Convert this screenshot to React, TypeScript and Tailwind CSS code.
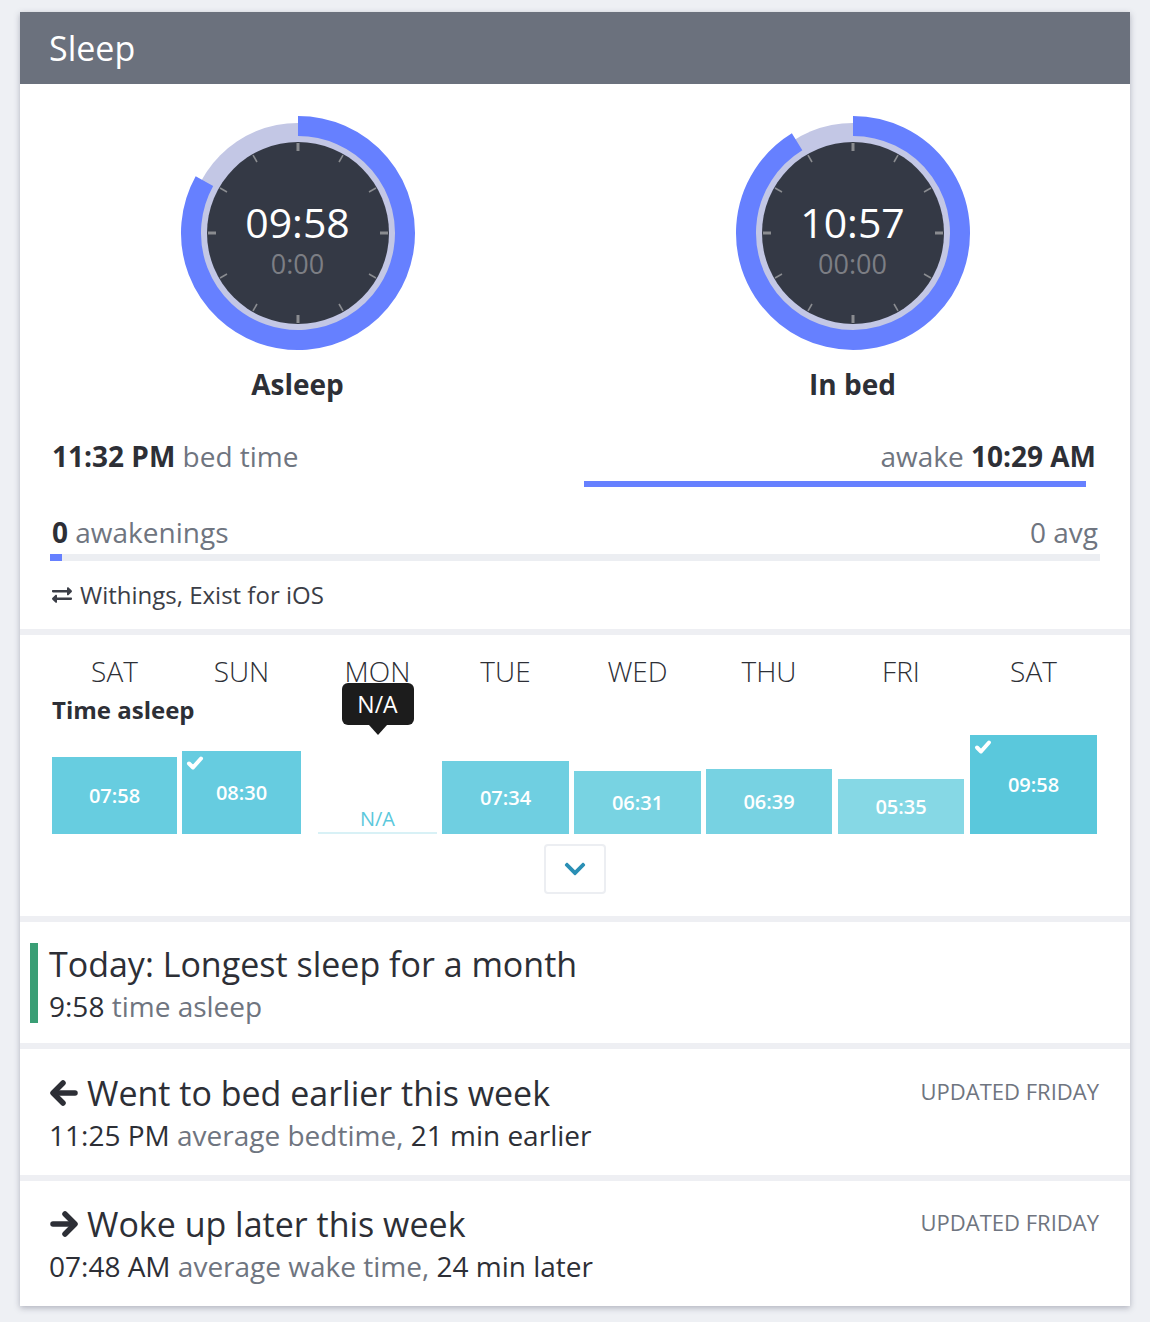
import { FaExchangeAlt, FaChevronDown } from 'react-icons/fa';

function arcPath(frac: number) {
  const a = frac * 2 * Math.PI;
  const r = 107;
  const x = 120 + r * Math.sin(a);
  const y = 120 - r * Math.cos(a);
  const large = frac > 0.5 ? 1 : 0;
  return `M 120 13 A ${r} ${r} 0 ${large} 1 ${x.toFixed(2)} ${y.toFixed(2)}`;
}

function Dial({ value, sub, frac, label }: { value: string; sub: string; frac: number; label: string }) {
  const ticks = Array.from({ length: 12 }, (_, i) => i * 30);
  return (
    <div className="flex flex-col items-center">
      <div className="relative w-[240px] h-[240px]">
        <svg width="240" height="240" viewBox="0 0 240 240">
          <circle cx="120" cy="120" r="110" fill="#c3c7e5" />
          <path d={arcPath(frac)} fill="none" stroke="#6680ff" strokeWidth="20" />
          <circle cx="120" cy="120" r="91" fill="#343945" />
          {ticks.map((deg) => {
            const a = (deg * Math.PI) / 180;
            return (
              <line
                key={deg}
                x1={120 + 82 * Math.sin(a)}
                y1={120 - 82 * Math.cos(a)}
                x2={120 + 90 * Math.sin(a)}
                y2={120 - 90 * Math.cos(a)}
                stroke="#8a8c90"
                strokeWidth={deg % 90 === 0 ? 3 : 1.6}
              />
            );
          })}
        </svg>
        <div className="absolute inset-0 flex flex-col items-center pt-[89px]">
          <div className="text-white text-[41px] leading-[40px]">{value}</div>
          <div className="text-[#7c7e84] text-[27px] leading-[28px] mt-[8px]">{sub}</div>
        </div>
      </div>
      <div className="mt-[15px] text-[28px] leading-[32px] font-bold text-[#2d2f36]">{label}</div>
    </div>
  );
}

function Check() {
  return (
    <svg className="absolute left-[4px] top-[4px]" width="18" height="16" viewBox="0 0 18 16">
      <polyline points="3,8.5 7,12.5 15,3.5" fill="none" stroke="white" strokeWidth="4" strokeLinecap="round" strokeLinejoin="round" />
    </svg>
  );
}

function Arrow({ dir }: { dir: 'left' | 'right' }) {
  return (
    <svg width="30" height="28" viewBox="0 0 30 28" className={dir === 'right' ? 'scale-x-[-1]' : ''}>
      <polyline points="14,4 4,14 14,24" fill="none" stroke="#2d2f36" strokeWidth="5.5" strokeLinecap="round" strokeLinejoin="round" />
      <line x1="5" y1="14" x2="26" y2="14" stroke="#2d2f36" strokeWidth="5.5" strokeLinecap="round" />
    </svg>
  );
}

const days = [
  { day: 'SAT', value: '07:58', box: 'w-[125px] h-[77px] bg-[#67cde0]', col: 'w-[125px]', check: false },
  { day: 'SUN', value: '08:30', box: 'w-[119px] h-[83px] bg-[#66cce0]', col: 'w-[119px] ml-[5px]', check: true },
  { day: 'MON', value: 'N/A', box: '', col: 'w-[119px] ml-[17px]', check: false },
  { day: 'TUE', value: '07:34', box: 'w-[127px] h-[73px] bg-[#6fcfe1]', col: 'w-[127px] ml-[5px]', check: false },
  { day: 'WED', value: '06:31', box: 'w-[127px] h-[63px] bg-[#78d3e2]', col: 'w-[127px] ml-[5px]', check: false },
  { day: 'THU', value: '06:39', box: 'w-[126px] h-[65px] bg-[#77d2e2]', col: 'w-[126px] ml-[5px]', check: false },
  { day: 'FRI', value: '05:35', box: 'w-[126px] h-[55px] bg-[#86d8e5]', col: 'w-[126px] ml-[6px]', check: false },
  { day: 'SAT', value: '09:58', box: 'w-[127px] h-[99px] bg-[#5ac8dc]', col: 'w-[127px] ml-[6px]', check: true },
];

function Divider() {
  return <div className="h-[6px] bg-[#eeeff3]" />;
}

export default function App() {
  return (
    <div className="min-h-screen bg-[#eef0f4] pt-[12px] px-[20px] pb-[17px] font-['Open_Sans',sans-serif]">
      <div className="bg-white shadow-[0_2px_6px_rgba(60,64,90,0.35)]">
        {/* Header */}
        <div className="h-[72px] bg-[#6b717d] flex items-center px-[29px]">
          <h1 className="text-white text-[34px] leading-none">Sleep</h1>
        </div>

        {/* Dials */}
        <div className="grid grid-cols-2 pt-[29px]">
          <Dial value="09:58" sub="0:00" frac={9.967 / 12} label="Asleep" />
          <Dial value="10:57" sub="00:00" frac={10.95 / 12} label="In bed" />
        </div>

        {/* Bed / awake */}
        <div className="px-[30px] pt-[40px] pb-[20px]">
          <div className="grid grid-cols-2">
            <div className="text-[28px] leading-[32px] ml-[2px]">
              <span className="font-bold text-[#2d2f36]">11:32 PM</span>{' '}
              <span className="text-[#6f7580]">bed time</span>
            </div>
            <div className="flex flex-col">
              <div className="text-[28px] leading-[32px] text-right mr-[4px]">
                <span className="text-[#6f7580]">awake</span>{' '}
                <span className="font-bold text-[#2d2f36]">10:29 AM</span>
              </div>
              <div className="h-[6px] bg-[#6680ff] mt-[9px] ml-[9px] mr-[14px]" />
            </div>
          </div>

          <div className="flex justify-between items-baseline mt-[29px] text-[28px] leading-[32px] px-[2px]">
            <div>
              <span className="font-bold text-[#2d2f36]">0</span>{' '}
              <span className="text-[#6f7580]">awakenings</span>
            </div>
            <span className="text-[#6f7580]">0 avg</span>
          </div>
          <div className="h-[7px] bg-[#eceef2] mt-[6px]">
            <div className="h-full w-[12px] bg-[#6680ff]" />
          </div>

          <div className="flex items-center gap-[6px] mt-[20px] text-[24px] leading-[28px] text-[#3b3e47]">
            <FaExchangeAlt className="w-[24px] h-[20px]" />
            <span>Withings, Exist for iOS</span>
          </div>
        </div>

        <Divider />

        {/* Weekly chart */}
        <div className="px-[32px] pt-[20px] pb-[22px]">
          <div className="flex">
            {days.map((d, i) => (
              <div key={i} className={`${d.col} relative text-center text-[28px] leading-[32px] font-light text-[#2d2f36]`}>
                {d.day}
                {d.value === 'N/A' && (
                  <div className="absolute left-1/2 -translate-x-1/2 top-[28px] z-10 flex flex-col items-center">
                    <div className="bg-[#1c1c1c] text-white text-[23px] leading-[42px] font-normal w-[72px] rounded-[6px]">N/A</div>
                    <div className="w-0 h-0 border-l-[9px] border-r-[9px] border-t-[10px] border-l-transparent border-r-transparent border-t-[#1c1c1c]" />
                  </div>
                )}
              </div>
            ))}
          </div>
          <div className="mt-[9px] text-[24px] leading-[28px] font-bold text-[#2d2f36]">Time asleep</div>

          <div className="flex items-end h-[110px]">
            {days.map((d, i) =>
              d.value === 'N/A' ? (
                <div key={i} className={`${d.col} flex flex-col items-center`}>
                  <span className="text-[#5bc8dc] text-[20px] leading-[24px] mb-[1px]">N/A</span>
                  <div className="w-full h-[2px] bg-[#d8f1f6]" />
                </div>
              ) : (
                <div key={i} className={`${d.col} relative flex items-center justify-center ${d.box}`}>
                  {d.check && <Check />}
                  <span className="text-white text-[20px] leading-[24px] font-semibold">{d.value}</span>
                </div>
              )
            )}
          </div>

          <div className="flex justify-center mt-[10px]">
            <button className="w-[62px] h-[50px] border-2 border-[#eceef2] rounded-[4px] flex items-center justify-center">
              <FaChevronDown className="w-[24px] h-[24px] text-[#2a8fb5]" />
            </button>
          </div>
        </div>

        <Divider />

        {/* Today */}
        <div className="pt-[21px] pb-[20px] pl-[10px]">
          <div className="border-l-[8px] border-[#3a9e75] pl-[11px]">
            <div className="text-[34px] leading-[42px] text-[#2d2f36]">Today: Longest sleep for a month</div>
            <div className="text-[28px] leading-[34px] mt-[4px]">
              <span className="text-[#2d2f36]">9:58</span> <span className="text-[#6f7580]">time asleep</span>
            </div>
          </div>
        </div>

        <Divider />

        <div className="px-[29px] pt-[23px] pb-[23px] flex justify-between">
          <div>
            <div className="flex items-center gap-[8px] text-[34px] leading-[42px] text-[#2d2f36]">
              <Arrow dir="left" />
              <span>Went to bed earlier this week</span>
            </div>
            <div className="text-[28px] leading-[34px] mt-[4px]">
              <span className="text-[#2d2f36]">11:25 PM</span>{' '}
              <span className="text-[#6f7580]">average bedtime,</span>{' '}
              <span className="text-[#2d2f36]">21 min earlier</span>
            </div>
          </div>
          <div className="text-[22px] leading-[28px] text-[#6f7580] pt-[5px] mr-[2px]">UPDATED FRIDAY</div>
        </div>

        <Divider />

        <div className="px-[29px] pt-[22px] pb-[23px] flex justify-between">
          <div>
            <div className="flex items-center gap-[8px] text-[34px] leading-[42px] text-[#2d2f36]">
              <Arrow dir="right" />
              <span>Woke up later this week</span>
            </div>
            <div className="text-[28px] leading-[34px] mt-[4px]">
              <span className="text-[#2d2f36]">07:48 AM</span>{' '}
              <span className="text-[#6f7580]">average wake time,</span>{' '}
              <span className="text-[#2d2f36]">24 min later</span>
            </div>
          </div>
          <div className="text-[22px] leading-[28px] text-[#6f7580] pt-[5px] mr-[2px]">UPDATED FRIDAY</div>
        </div>
      </div>
    </div>
  );
}
